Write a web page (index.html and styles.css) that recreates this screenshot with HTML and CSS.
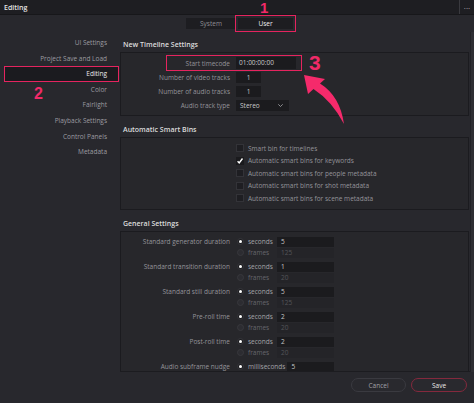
FILE: index.html
```html
<!DOCTYPE html>
<html lang="en">
<head>
    <meta charset="UTF-8">
    <meta name="viewport" content="width=device-width, initial-scale=1.0">
    <title>Editing</title>
    <link rel="stylesheet" href="styles.css">
</head>
<body>
    <div class="window">
        <div class="titlebar">
            <span class="title">Editing</span>
            <span class="more">&middot;&middot;&middot;</span>
        </div>

        <div class="tabs">
            <button class="tab system">System</button>
            <button class="tab active">User</button>
        </div>

        <div class="content">
            <ul class="sidebar">
                <li class="side-item">UI Settings</li>
                <li class="side-item">Project Save and Load</li>
                <li class="side-item active">Editing</li>
                <li class="side-item">Color</li>
                <li class="side-item">Fairlight</li>
                <li class="side-item">Playback Settings</li>
                <li class="side-item">Control Panels</li>
                <li class="side-item">Metadata</li>
            </ul>

            <div class="main">
                <section class="group">
                    <h2>New Timeline Settings</h2>
                    <div class="box timeline">
                        <div class="row">
                            <span class="label">Start timecode</span>
                            <div class="field tc">01:00:00:00</div>
                        </div>
                        <div class="row">
                            <span class="label">Number of video tracks</span>
                            <div class="field num">1</div>
                        </div>
                        <div class="row">
                            <span class="label">Number of audio tracks</span>
                            <div class="field num">1</div>
                        </div>
                        <div class="row">
                            <span class="label">Audio track type</span>
                            <div class="field select">
                                <span>Stereo</span>
                                <svg width="5" height="3" viewBox="0 0 5 3"><path d="M0.3 0.3 L2.5 2.5 L4.7 0.3" stroke="#a8a8ac" stroke-width="0.8" fill="none"/></svg>
                            </div>
                        </div>
                    </div>
                </section>

                <section class="group">
                    <h2>Automatic Smart Bins</h2>
                    <div class="box bins">
                        <div class="check"><span class="cb"></span>Smart bin for timelines</div>
                        <div class="check"><span class="cb on"><svg width="8" height="8" viewBox="0 0 8 8"><path d="M1.6 4.3 L3.2 6 L6.5 1.5" stroke="#fff" stroke-width="1.4" fill="none"/></svg></span>Automatic smart bins for keywords</div>
                        <div class="check"><span class="cb"></span>Automatic smart bins for people metadata</div>
                        <div class="check"><span class="cb"></span>Automatic smart bins for shot metadata</div>
                        <div class="check"><span class="cb"></span>Automatic smart bins for scene metadata</div>
                    </div>
                </section>

                <section class="group">
                    <h2>General Settings</h2>
                    <div class="box general">
                        <div class="setting">
                            <span class="label">Standard generator duration</span>
                            <div class="opts">
                                <div class="opt"><span class="radio on"></span><span class="opt-text">seconds</span><div class="field small">5</div></div>
                                <div class="opt off"><span class="radio"></span><span class="opt-text">frames</span><div class="field small">125</div></div>
                            </div>
                        </div>
                        <div class="setting">
                            <span class="label">Standard transition duration</span>
                            <div class="opts">
                                <div class="opt"><span class="radio on"></span><span class="opt-text">seconds</span><div class="field small">1</div></div>
                                <div class="opt off"><span class="radio"></span><span class="opt-text">frames</span><div class="field small">20</div></div>
                            </div>
                        </div>
                        <div class="setting">
                            <span class="label">Standard still duration</span>
                            <div class="opts">
                                <div class="opt"><span class="radio on"></span><span class="opt-text">seconds</span><div class="field small">5</div></div>
                                <div class="opt off"><span class="radio"></span><span class="opt-text">frames</span><div class="field small">125</div></div>
                            </div>
                        </div>
                        <div class="setting">
                            <span class="label">Pre-roll time</span>
                            <div class="opts">
                                <div class="opt"><span class="radio on"></span><span class="opt-text">seconds</span><div class="field small">2</div></div>
                                <div class="opt off"><span class="radio"></span><span class="opt-text">frames</span><div class="field small">20</div></div>
                            </div>
                        </div>
                        <div class="setting">
                            <span class="label">Post-roll time</span>
                            <div class="opts">
                                <div class="opt"><span class="radio on"></span><span class="opt-text">seconds</span><div class="field small">2</div></div>
                                <div class="opt off"><span class="radio"></span><span class="opt-text">frames</span><div class="field small">20</div></div>
                            </div>
                        </div>
                        <div class="setting">
                            <span class="label">Audio subframe nudge</span>
                            <div class="opts">
                                <div class="opt"><span class="radio on"></span><span class="opt-text">milliseconds</span><div class="field small">5</div></div>
                            </div>
                        </div>
                    </div>
                </section>
            </div>

            <div class="scrollbar"></div>
        </div>

        <div class="footer">
            <button class="btn">Cancel</button>
            <button class="btn save">Save</button>
        </div>

        <!-- tutorial annotations -->
        <div class="hl hl-timecode"></div>
        <span class="mark mark-1">1</span>
        <span class="mark mark-2">2</span>
        <span class="mark mark-3">3</span>
        <svg class="arrow" width="60" height="60" viewBox="0 0 60 60">
            <path d="M9 7 L30 11 L25 15.5 Q45 28 49 56 Q37 33 18.5 21 L13 26 Z" fill="#f52a6b"/>
        </svg>
    </div>
</body>
</html>
```

FILE: styles.css
```css
* {
    box-sizing: border-box;
}

body {
    margin: 0;
    background: #28282d;
    font-family: "Open Sans", "DejaVu Sans", sans-serif;
    font-size: 6.5px;
    color: #95959a;
}

.window {
    position: relative;
    width: 474px;
    height: 403px;
    overflow: hidden;
    display: flex;
    flex-direction: column;
}

/* title bar */
.titlebar {
    height: 15px;
    flex: none;
    display: flex;
    align-items: center;
    background: #1e1e22;
    border-bottom: 1px solid #17171a;
}

.title {
    flex: 1;
    padding-left: 4px;
    color: #e4e4e4;
    font-size: 7px;
    font-weight: 600;
}

.more {
    width: 15px;
    height: 100%;
    display: flex;
    align-items: center;
    justify-content: center;
    border-left: 1px solid #3a3a3f;
    color: #c0c0c0;
    font-size: 8px;
}

/* system / user tabs */
.tabs {
    height: 17px;
    flex: none;
    display: flex;
    align-items: center;
    justify-content: center;
    gap: 2px;
    padding-left: 5px;
}

.tab {
    height: 11px;
    padding: 0;
    border: none;
    background: #1d1d21;
    font: inherit;
    color: #8e8e93;
}

.tab.system {
    width: 50px;
}

.tab.active {
    width: 55px;
    color: #f0f0f0;
    outline: 1.5px solid #e5245f;
    outline-offset: 2px;
}

.content {
    flex: 1;
    min-height: 0;
    display: flex;
}

/* sidebar */
.sidebar {
    width: 120px;
    flex: none;
    list-style: none;
    margin: 0;
    padding: 3px 1px 0 4px;
}

.side-item {
    height: 15.6px;
    line-height: 15.6px;
    text-align: right;
    padding-right: 12px;
    color: #9c9ca1;
}

.side-item.active {
    background: #1b1b1f;
    color: #ededed;
    outline: 1.5px solid #e5245f;
    outline-offset: -1.5px;
}

/* main settings area */
.main {
    flex: 1;
    overflow: hidden;
    padding: 6px 1px 0 0;
    border-bottom: 1px solid #1c1c20;
}

.group {
    margin-bottom: 7px;
}

.group h2 {
    margin: 0 0 1px;
    height: 13px;
    line-height: 13px;
    padding-left: 3px;
    font-size: 7px;
    font-weight: 600;
    color: #dcdcdc;
}

.box {
    border: 1px solid #1b1b1f;
    background: #27272b;
}

.label {
    text-align: right;
    color: #94949a;
    white-space: nowrap;
}

.field {
    background: #1b1b1e;
    color: #c8c8c8;
    white-space: nowrap;
}

/* new timeline settings */
.timeline {
    padding: 3px 0;
}

.row {
    height: 14px;
    display: grid;
    grid-template-columns: 109px auto;
    column-gap: 6px;
    align-items: center;
}

.tc {
    width: 60px;
    height: 12px;
    line-height: 12px;
    padding-left: 3px;
}

.num {
    width: 25px;
    height: 11px;
    line-height: 11px;
    text-align: center;
}

.select {
    width: 53px;
    height: 11px;
    display: flex;
    align-items: center;
    justify-content: space-between;
    padding: 0 6px 0 4px;
}

/* smart bins */
.bins {
    padding: 4px 0 4px 115px;
}

.check {
    height: 12.5px;
    display: flex;
    align-items: center;
    gap: 4px;
    color: #94949a;
}

.cb {
    width: 8px;
    height: 8px;
    display: flex;
    background: #1e1e22;
    border: 1px solid #333338;
}

.cb.on {
    border: none;
    background: #1a1a1d;
}

/* general settings */
.general {
    padding-top: 4.5px;
    height: 200px;
}

.setting {
    display: grid;
    grid-template-columns: 109px 98px;
    column-gap: 6px;
    margin-bottom: 3px;
}

.setting .label {
    line-height: 11px;
}

.opt {
    height: 11px;
    display: flex;
    align-items: center;
}

.radio {
    width: 7px;
    height: 7px;
    margin-left: 1px;
    border-radius: 50%;
    background: #1c1c1f;
    border: 1px solid #36363b;
    display: flex;
    align-items: center;
    justify-content: center;
}

.radio.on::after {
    content: "";
    width: 3px;
    height: 3px;
    border-radius: 50%;
    background: #ffffff;
}

.opt-text {
    min-width: 27px;
    margin: 0 2px 0 4px;
    color: #a4a4a9;
}

.small {
    flex: 1;
    height: 10px;
    line-height: 10px;
    padding-left: 4px;
}

.opt.off .opt-text {
    color: #66666b;
}

.opt.off .radio {
    background: #2c2c31;
    border-color: #38383d;
}

.opt.off .small {
    background: #242428;
    color: #55555a;
}

.scrollbar {
    width: 4px;
    flex: none;
    background: #2e2e33;
    border-left: 1px solid #222226;
}

/* footer */
.footer {
    height: 31px;
    flex: none;
    display: flex;
    justify-content: flex-end;
    align-items: flex-start;
    gap: 5px;
    padding: 6px 7px 0 0;
}

.btn {
    width: 55px;
    height: 14px;
    padding: 0;
    border-radius: 7px;
    border: 1px solid #3a3a40;
    background: #29292e;
    font: inherit;
    color: #a0a0a5;
}

.btn.save {
    width: 56px;
    border-color: #84293d;
    color: #e8e8e8;
}

/* annotations */
.hl {
    position: absolute;
    border: 1.5px solid #e5245f;
}

.hl-timecode {
    left: 166px;
    top: 55px;
    width: 136px;
    height: 16px;
}

.mark {
    position: absolute;
    font-family: "Liberation Sans", sans-serif;
    font-weight: bold;
    line-height: 1;
    color: #f02a68;
}

.mark-1 {
    left: 260px;
    top: 0;
    font-size: 15px;
}

.mark-2 {
    left: 34px;
    top: 86px;
    font-size: 16px;
}

.mark-3 {
    left: 309px;
    top: 52px;
    font-size: 21px;
}

.arrow {
    position: absolute;
    left: 295px;
    top: 68px;
}
```
